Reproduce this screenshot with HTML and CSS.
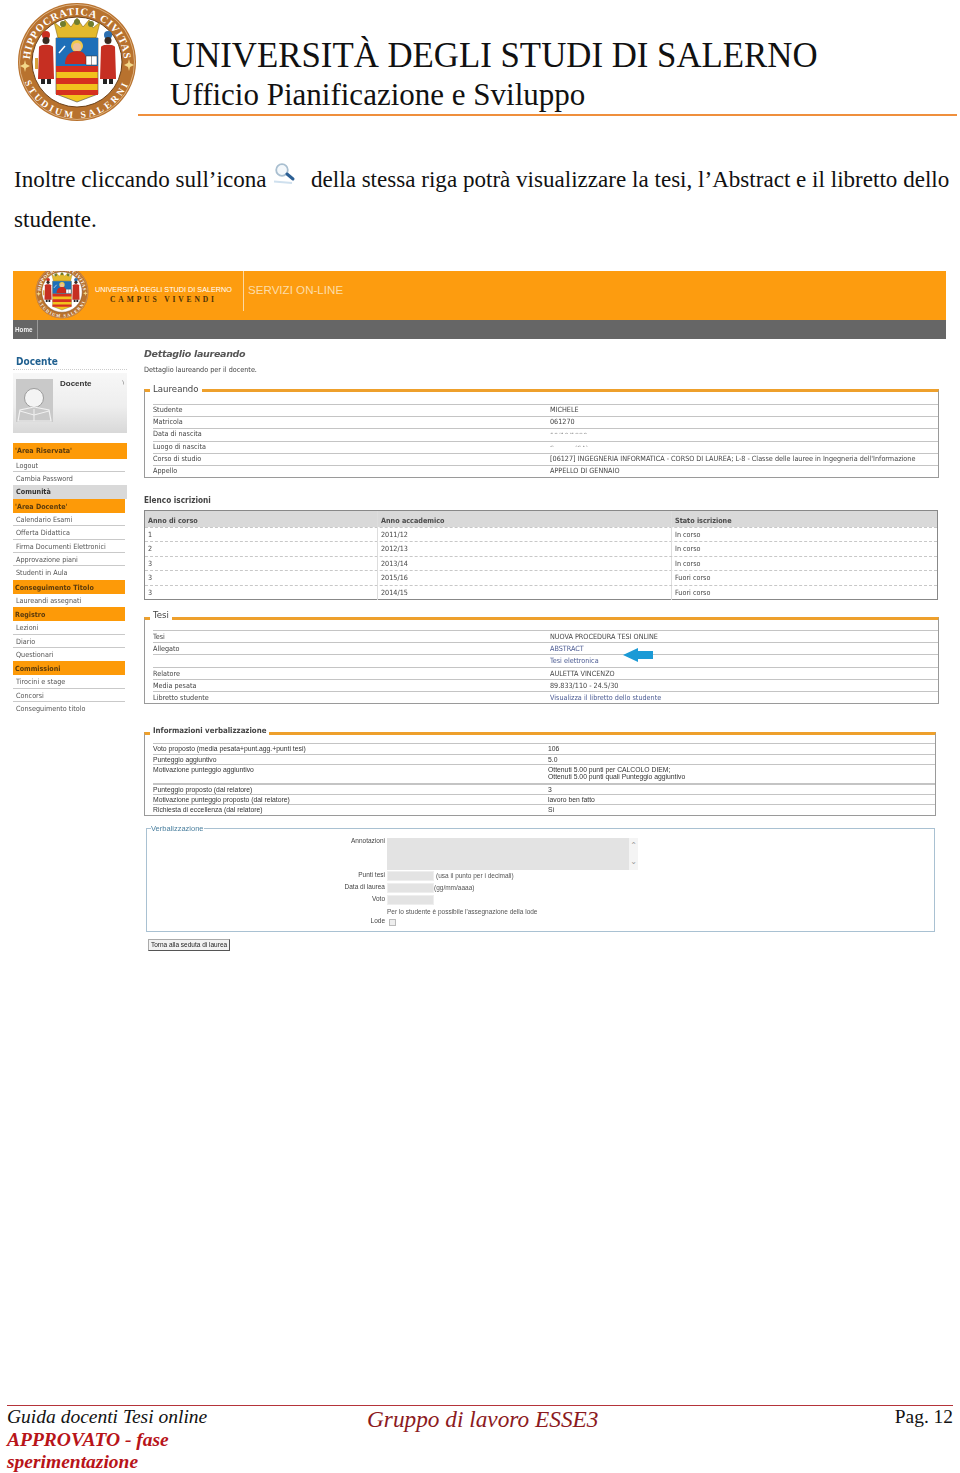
FILE: index.html
```html
<!DOCTYPE html>
<html lang="it">
<head>
<meta charset="utf-8">
<title>Guida docenti Tesi online</title>
<link rel="stylesheet" href="styles.css">
</head>
<body>
<svg class="defs" width="0" height="0" aria-hidden="true">
  <symbol id="seal" viewBox="0 0 120 120">
    <circle cx="60" cy="60" r="59" fill="#b8722e"/>
    <circle cx="60" cy="60" r="57.500" fill="none" stroke="#e9c9a0" stroke-width=".7"/>
    <circle cx="60" cy="60" r="45" fill="#fff" stroke="#6b3f16" stroke-width="1"/>
    <defs>
      <path id="arcTop" d="M14.600 72 A47 47 0 1 1 105.400 72"/>
      <path id="arcBottom" d="M4.900 70 A56 56 0 0 0 115.100 70"/>
    </defs>
    <text class="seal-text"><textPath href="#arcTop" startOffset="50%" text-anchor="middle">HIPPOCRATICA CIVITAS</textPath></text>
    <text class="seal-text seal-low"><textPath href="#arcBottom" startOffset="50%" text-anchor="middle">STUDIUM SALERNI</textPath></text>
    <path d="M3 64l4-2 1-4 1 4 4 2-4 2-1 4-1-4zM107 63l4-2 1-4 1 4 4 2-4 2-1 4-1-4z" fill="#f3d98a"/>
    <path d="M37 20l7 6 4-8 6 7 6-9 6 9 6-7 4 8 7-6-4 16H41z" fill="#e3b92c" stroke="#8a6a12" stroke-width=".6"/>
    <circle cx="46" cy="22" r="3" fill="#6f7d2e"/><circle cx="60" cy="20" r="3" fill="#6f7d2e"/><circle cx="74" cy="22" r="3" fill="#6f7d2e"/>
    <path d="M39 36h42v56l-21 8-21-8z" fill="#f2c21d" stroke="#444" stroke-width=".6"/>
    <path d="M39 36h42v28H39z" fill="#1e6fb8"/>
    <path d="M39 64h42v6H39zM39 76h42v6H39zM39 88h42v5H39z" fill="#d6301f"/>
    <circle cx="60" cy="44" r="6" fill="#f0c84a"/>
    <circle cx="60" cy="45" r="4" fill="#eec19a"/>
    <path d="M48 62c0-8 5-13 12-13s10 4 10 13z" fill="#c92a1d"/>
    <path d="M69 54h11v9H69z" fill="#fff" stroke="#333" stroke-width=".5"/>
    <path d="M74.500 54v9" stroke="#333" stroke-width=".5"/>
    <path d="M42 51l6-7" stroke="#fff" stroke-width="1.400"/>
    <circle cx="29" cy="33" r="4" fill="#c9301f"/><circle cx="29" cy="38.500" r="3.500" fill="#3a2a20"/>
    <path d="M22 45c1-3 13-3 14 0l1 32H21z" fill="#c62f22"/>
    <path d="M24 77h4v5h-4zM30 77h4v5h-4z" fill="#222"/>
    <path d="M21 56h-3v11h3z" fill="#d7a23e"/>
    <circle cx="91" cy="33" r="4" fill="#2c6fb0"/><circle cx="91" cy="38.500" r="3.500" fill="#3a2a20"/>
    <path d="M84 45c1-3 13-3 14 0l1 32H83z" fill="#c62f22"/>
    <path d="M86 77h4v5h-4zM92 77h4v5h-4z" fill="#222"/>
  </symbol>
</svg>

<header class="doc-head">
  <svg class="doc-seal" viewBox="0 0 120 120" aria-hidden="true"><use href="#seal"/></svg>
  <div class="doc-title">
    <div class="t1">UNIVERSITÀ DEGLI STUDI DI SALERNO</div>
    <div class="t2">Ufficio Pianificazione e Sviluppo</div>
  </div>
</header>

<p class="intro">Inoltre cliccando sull’icona <svg class="lens" viewBox="0 0 24 22" aria-hidden="true"><path d="M1 19.500l18 1.500" stroke="#cfe0ee" stroke-width="2"/><circle cx="9" cy="8" r="5.800" fill="#f4f8fb" stroke="#a9bfd0" stroke-width="1.800"/><path d="M14 12l6 5" stroke="#2c5f94" stroke-width="3" stroke-linecap="round"/></svg> della stessa riga potrà visualizzare la tesi, l’Abstract e il libretto dello<br>studente.</p>

<section class="app">
  <div class="app-top">
    <div class="brand">
      <svg class="app-seal" viewBox="0 0 120 120" aria-hidden="true"><use href="#seal"/></svg>
      <div class="brand-text">
        <div class="b1">UNIVERSITÀ DEGLI STUDI DI SALERNO</div>
        <div class="b2">CAMPUS VIVENDI</div>
      </div>
    </div>
    <div class="services">SERVIZI ON-LINE</div>
  </div>
  <nav class="app-nav"><span class="home">Home</span></nav>

  <div class="app-body">
    <aside class="side">
      <h2 class="side-title">Docente</h2>
      <div class="profile">
        <svg class="avatar" viewBox="0 0 37 43" aria-hidden="true"><rect width="37" height="43" fill="#c9c9c9"/><circle cx="18" cy="19" r="9.500" fill="#f4f4f4" stroke="#9c9c9c"/><path d="M2 42l2-11 14-3 15 3 2 11z" fill="none" stroke="#f2f2f2" stroke-width="1.200"/><path d="M18 30v12M4 32l14 4 15-4" fill="none" stroke="#f2f2f2"/></svg>
        <strong class="profile-name">Docente</strong>
        <span class="profile-tick">\</span>
      </div>
      <ul class="menu">
        <li class="m-head wide">'Area Riservata'</li>
        <li class="m-item">Logout</li>
        <li class="m-item last">Cambia Password</li>
        <li class="m-grey">Comunità</li>
        <li class="m-head">'Area Docente'</li>
        <li class="m-item">Calendario Esami</li>
        <li class="m-item">Offerta Didattica</li>
        <li class="m-item">Firma Documenti Elettronici</li>
        <li class="m-item">Approvazione piani</li>
        <li class="m-item last">Studenti in Aula</li>
        <li class="m-head">Conseguimento Titolo</li>
        <li class="m-item last">Laureandi assegnati</li>
        <li class="m-head">Registro</li>
        <li class="m-item">Lezioni</li>
        <li class="m-item">Diario</li>
        <li class="m-item last">Questionari</li>
        <li class="m-head">Commissioni</li>
        <li class="m-item">Tirocini e stage</li>
        <li class="m-item">Concorsi</li>
        <li class="m-item last">Conseguimento titolo</li>
      </ul>
    </aside>

    <main class="content">
      <h1 class="page-title">Dettaglio laureando</h1>
      <p class="page-sub">Dettaglio laureando per il docente.</p>

      <fieldset class="box box-laureando">
        <legend>Laureando</legend>
        <div class="row"><span>Studente</span><span>MICHELE</span></div>
        <div class="row"><span>Matricola</span><span>061270</span></div>
        <div class="row"><span>Data di nascita</span><span class="hidden-top">10/10/1990</span></div>
        <div class="row"><span>Luogo di nascita</span><span class="hidden-top">S. . . . . (SA)</span></div>
        <div class="row"><span>Corso di studio</span><span>[06127] INGEGNERIA INFORMATICA - CORSO DI LAUREA; L-8 - Classe delle lauree in Ingegneria dell'Informazione</span></div>
        <div class="row"><span>Appello</span><span>APPELLO DI GENNAIO</span></div>
      </fieldset>

      <h3 class="list-title">Elenco iscrizioni</h3>
      <div class="enrol">
        <div class="enrol-row enrol-head"><span>Anno di corso</span><span>Anno accademico</span><span>Stato iscrizione</span></div>
        <div class="enrol-row"><span>1</span><span>2011/12</span><span>In corso</span></div>
        <div class="enrol-row"><span>2</span><span>2012/13</span><span>In corso</span></div>
        <div class="enrol-row"><span>3</span><span>2013/14</span><span>In corso</span></div>
        <div class="enrol-row"><span>3</span><span>2015/16</span><span>Fuori corso</span></div>
        <div class="enrol-row"><span>3</span><span>2014/15</span><span>Fuori corso</span></div>
      </div>

      <fieldset class="box box-tesi">
        <legend>Tesi</legend>
        <div class="row"><span>Tesi</span><span>NUOVA PROCEDURA TESI ONLINE</span></div>
        <div class="row"><span>Allegato</span><span class="link">ABSTRACT</span></div>
        <div class="row"><span></span><span class="link has-arrow">Tesi elettronica<svg class="arrow" viewBox="0 0 30 14" aria-hidden="true"><path d="M0 7L15 0v3h15v8H15v3z"/></svg></span></div>
        <div class="row"><span>Relatore</span><span>AULETTA VINCENZO</span></div>
        <div class="row"><span>Media pesata</span><span>89.833/110 - 24.5/30</span></div>
        <div class="row"><span>Libretto studente</span><span class="link">Visualizza il libretto dello studente</span></div>
      </fieldset>

      <fieldset class="box box-info">
        <legend>Informazioni verbalizzazione</legend>
        <div class="row"><span>Voto proposto (media pesata+punt.agg.+punti tesi)</span><span>106</span></div>
        <div class="row"><span>Punteggio aggiuntivo</span><span>5.0</span></div>
        <div class="row tall"><span>Motivazione punteggio aggiuntivo</span><span>Ottenuti 5.00 punti per CALCOLO DIEM;<br>Ottenuti 5.00 punti quali Punteggio aggiuntivo</span></div>
        <div class="row"><span>Punteggio proposto (dal relatore)</span><span>3</span></div>
        <div class="row"><span>Motivazione punteggio proposto (dal relatore)</span><span>lavoro ben fatto</span></div>
        <div class="row"><span>Richiesta di eccellenza (dal relatore)</span><span>Sì</span></div>
      </fieldset>

      <fieldset class="verb">
        <legend>Verbalizzazione</legend>
        <div class="form">
          <label class="f-label f-first">Annotazioni</label>
          <div class="f-area"><span class="scroll"><i>⌃</i><i>⌄</i></span></div>
          <label class="f-label">Punti tesi</label>
          <div class="f-line"><span class="f-input"></span><span class="hint hint-a">(usa il punto per i decimali)</span></div>
          <label class="f-label">Data di laurea</label>
          <div class="f-line"><span class="f-input"></span><span class="hint">(gg/mm/aaaa)</span></div>
          <label class="f-label">Voto</label>
          <div class="f-line"><span class="f-input"></span></div>
          <span></span>
          <div class="f-note">Per lo studente è possibile l'assegnazione della lode</div>
          <label class="f-label">Lode</label>
          <div class="f-line"><span class="f-check"></span></div>
        </div>
      </fieldset>
      <button class="back" type="button">Torna alla seduta di laurea</button>
    </main>
  </div>
</section>

<footer class="doc-foot">
  <div class="foot-left">
    <div>Guida docenti Tesi online</div>
    <div class="approved">APPROVATO - fase sperimentazione</div>
  </div>
  <div class="foot-mid">Gruppo di lavoro ESSE3</div>
  <div class="foot-right">Pag. 12</div>
</footer>
</body>
</html>
```

FILE: styles.css
```css
* { box-sizing: border-box; }
html, body { margin: 0; padding: 0; }
body {
  width: 960px;
  height: 1473px;
  overflow: hidden;
  display: flex;
  flex-direction: column;
  background: #fff;
  color: #111;
  font-family: "Liberation Serif", serif;
}
.defs { position: absolute; }
.seal-text { font: bold 10.500px "Liberation Serif", serif; fill: #fff; letter-spacing: .8px; }
.seal-low { font-size: 9.500px; letter-spacing: 3px; }

.doc-head { display: flex; height: 122px; padding: 2px 0 0 17px; }
.doc-seal { width: 120px; height: 120px; flex: none; }
.doc-title {
  flex: 1;
  height: 114px;
  margin: 0 3px 0 1px;
  padding: 33px 0 0 32px;
  border-bottom: 2px solid #ef8f3c;
}
.t1 { font-size: 34.800px; line-height: 42px; color: #111; }
.t2 { font-size: 31px; line-height: 34px; margin-top: 1px; color: #111; }

.intro {
  margin: 37px 0 0 14px;
  font-size: 23.080px;
  line-height: 40px;
  white-space: nowrap;
}
.lens { width: 24px; height: 22px; margin: 0 8px 0 1px; vertical-align: 3px; }

.app {
  width: 933px;
  margin: 32px 0 0 13px;
  filter: blur(.35px);
  font-family: "DejaVu Sans Condensed", "DejaVu Sans", sans-serif;
  font-size: 7.200px;
  color: #444;
}
.app-top { display: flex; height: 49px; background: #fd9c0f; overflow: hidden; }
.brand { display: flex; width: 231px; height: 40px; border-right: 1px solid #fbd9a4; padding-left: 22px; }
.app-seal { width: 54px; height: 54px; margin-top: -6px; flex: none; }
.brand-text { margin: 14px 0 0 6px; text-align: center; }
.b1 { font: 7.250px/10px "Liberation Sans", sans-serif; color: #fff; white-space: nowrap; }
.b2 { font: bold 7.500px/10px "Liberation Serif", serif; color: #4b3108; letter-spacing: 2.900px; white-space: nowrap; }
.services { margin: 12px 0 0 4px; font: 11.600px/14px "Liberation Sans", sans-serif; color: #fcdca9; white-space: nowrap; }
.app-nav { height: 19px; background: #666; }
.home {
  display: inline-block;
  width: 25px;
  height: 19px;
  padding-left: 2px;
  border-right: 1px solid #999;
  color: #f2f2f2;
  font: bold 6.300px/19px "Liberation Sans", sans-serif;
}

.app-body { display: flex; }
.side { width: 114px; flex: none; padding-top: 16px; }
.side-title {
  margin: 0;
  height: 15px;
  padding-left: 3px;
  border-bottom: 1px dotted #ccc;
  font: bold 10px/13px "DejaVu Sans Condensed", sans-serif;
  color: #1f5f8f;
}
.profile {
  position: relative;
  height: 60px;
  margin-top: 3px;
  padding: 6px 0 0 3px;
  background: linear-gradient(#f7f7f7, #eeeeee 55%, #d8d8d8);
  display: flex;
  align-items: flex-start;
  gap: 7px;
}
.avatar { width: 37px; height: 43px; flex: none; }
.profile-name { font: bold 8px/10px "Liberation Sans", sans-serif; color: #333; }
.profile-tick { position: absolute; right: 3px; top: 6px; font-size: 5px; }
.menu { list-style: none; margin: 10px 0 0; padding: 0; }
.menu li { height: 13.400px; width: 112px; line-height: 14px; padding-left: 3px; white-space: nowrap; color: #555; }
.menu li.wide { width: 114px; height: 15.600px; line-height: 15px; }
.menu .m-head {
  height: 14px;
  padding-left: 2px;
  background: #fd9a08;
  color: #5a3a0c;
  font-weight: bold;
  font-size: 7.100px;
  line-height: 15px;
}
.menu .m-item { border-bottom: 1px solid #c9c9c9; }
.menu .m-item.last { border-bottom: 0; }
.menu .m-grey { width: 114px; background: #d9d9d9; font-weight: bold; color: #333; }

.content { flex: 1; padding: 8px 7px 0 17px; min-width: 0; }
.page-title { margin: 0; font: italic bold 9.500px/13px "DejaVu Sans", sans-serif; letter-spacing: -.3px; color: #555; }
.page-sub { margin: 5px 0 0; line-height: 10px; color: #444; }

.box {
  display: block;
  min-width: 0;
  margin: 0;
  padding: 9px 0 0 8px;
  border: 1px solid #9a9a9a;
  border-top: 3px solid #eea02c;
}
.box legend {
  margin-left: -3px;
  padding: 0 3px;
  font: 8.600px/12px "DejaVu Sans", sans-serif;
  color: #444;
}
.box-laureando { margin-top: 8px; height: 95px; padding-top: 7px; }
.box-laureando legend { padding-bottom: 2px; }
.box-laureando .row { line-height: 10px; }
.row {
  display: grid;
  grid-template-columns: 397px 1fr;
  height: 12.200px;
  border-top: 1px solid #c4c4c4;
  line-height: 11px;
  white-space: nowrap;
}
.row span { min-width: 0; }
.hidden-top { height: 3px; overflow: hidden; line-height: 10px; opacity: .6; margin-top: 2px; }
.list-title { margin: 17px 0 0; font: bold 8.200px/10px "DejaVu Sans Condensed", sans-serif; color: #444; }
.enrol { margin-top: 5px; width: 794px; border: 1px solid #888; height: 90px; }
.enrol-row {
  display: grid;
  grid-template-columns: 232px 294px 1fr;
  height: 14.400px;
  border-top: 1px dashed #c8c8c8;
  line-height: 14px;
}
.enrol-row span { padding-left: 3px; border-left: 1px solid #ddd; }
.enrol-row span:first-child { border-left: 0; }
.enrol-head { height: 16px; border-top: 0; background: #d9d9d9; line-height: 19px; font-weight: bold; color: #4a4a4a; }
.box-tesi { margin-top: 9px; height: 95px; padding-top: 3px; }
.box-tesi legend { padding-bottom: 6px; }
.link { color: #4a5a92; }
.has-arrow { position: relative; }
.arrow { position: absolute; left: 73px; top: -7px; width: 30px; height: 14px; fill: #1b9ad6; }
.box-info { margin-top: 21px; width: 792px; height: 91px; padding-top: 2px; }
.box-info legend { font: bold 7.800px/12px "DejaVu Sans Condensed", sans-serif; padding-bottom: 4px; }
.box-info .row { height: 10.700px; line-height: 10px; font-family: "Liberation Sans", sans-serif; font-size: 6.800px; grid-template-columns: 395px 1fr; color: #333; }
.box-info .row.tall { height: 18.500px; line-height: 6.500px; padding-top: 2px; }
.box-info .row.tall + .row { border-top: 2px solid #c4c4c4; }
.verb {
  display: block;
  min-width: 0;
  width: 789px;
  height: 109px;
  margin: 7px 0 0 2px;
  padding: 0;
  border: 1.500px solid #a9c1d2;
}
.verb legend { margin-left: 4px; padding: 0; font: 7.500px/11px "Liberation Sans", sans-serif; color: #4a7f9e; }
.form {
  display: grid;
  grid-template-columns: 238px 1fr;
  column-gap: 2px;
  font: 6.500px/8px "Liberation Sans", sans-serif;
  color: #555;
  margin-top: 4px;
}
.f-label { text-align: right; color: #444; line-height: 10px; }
.f-first { line-height: 6px; }
.f-area { position: relative; width: 251px; height: 32px; background: #e3e3e3; }
.scroll { position: absolute; right: 0; top: 0; bottom: 0; width: 9px; background: #f4f4f4; display: flex; flex-direction: column; align-items: center; justify-content: space-around; }
.scroll i { font: normal 8px/8px "DejaVu Sans", sans-serif; color: #999; }
.f-line { display: flex; align-items: center; height: 12px; }
.f-input { width: 47px; height: 10.500px; background: #e3e3e3; border: 1px solid #eee; }
.hint { white-space: nowrap; }
.hint-a { margin-left: 2px; }
.f-note { height: 10px; line-height: 11px; }
.f-check { width: 7px; height: 7px; margin-left: 2px; background: #eee; border: 1px solid #bbb; }
.back {
  display: block;
  width: 82px;
  height: 12px;
  margin: 7px 0 0 4px;
  padding: 0;
  background: #f2f2f2;
  border: 1px solid #666;
  border-color: #aaa #555 #555 #aaa;
  font: 6.500px/10px "Liberation Sans", sans-serif;
  color: #222;
  white-space: nowrap;
}

.doc-foot {
  margin: auto 7px 0;
  height: 68px;
  border-top: 1px solid #b5343a;
  display: grid;
  grid-template-columns: 360px 1fr auto;
  font-size: 19.500px;
  line-height: 22.500px;
}
.foot-left { font-style: italic; width: 210px; }
.approved { color: #b81419; font-weight: bold; }
.foot-mid { font-style: italic; font-size: 23.300px; line-height: 27px; color: #8c1a1e; }
.foot-right { font-size: 19.400px; }
```
